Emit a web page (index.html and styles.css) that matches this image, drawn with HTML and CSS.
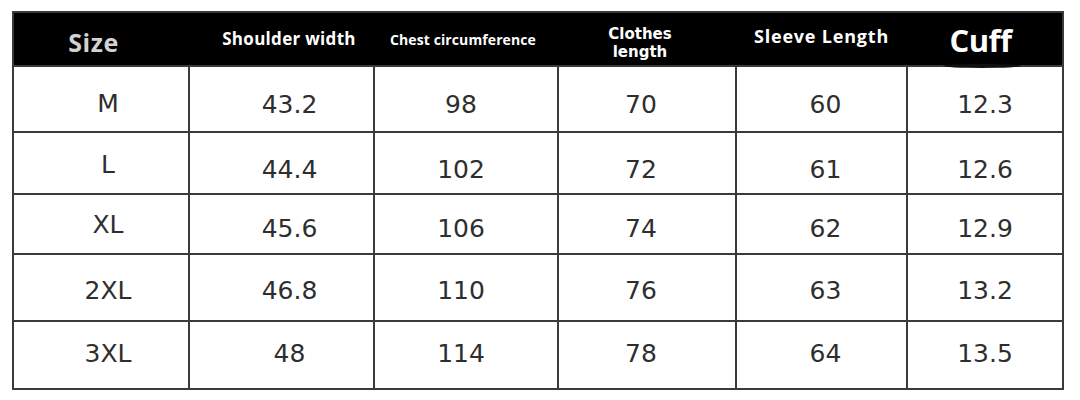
FILE: index.html
```html
<!DOCTYPE html>
<html>
<head>
<meta charset="utf-8">
<link rel="stylesheet" href="styles.css">
</head>
<body>
<table class="size-table">
  <colgroup>
    <col class="w1"><col class="w2"><col class="w3"><col class="w4"><col class="w5"><col class="w6">
  </colgroup>
  <thead>
    <tr>
      <th class="h-size">Size</th>
      <th class="h-shoulder">Shoulder width</th>
      <th class="h-chest">Chest circumference</th>
      <th class="h-clothes"><span class="line">Clothes</span><span class="line">length</span></th>
      <th class="h-sleeve">Sleeve Length</th>
      <th class="h-cuff">Cuff</th>
    </tr>
  </thead>
  <tbody>
    <tr class="r1"><td class="c1">M</td><td class="c2">43.2</td><td class="c3">98</td><td class="c4">70</td><td class="c5">60</td><td class="c6">12.3</td></tr>
    <tr class="r2"><td class="c1">L</td><td class="c2">44.4</td><td class="c3">102</td><td class="c4">72</td><td class="c5">61</td><td class="c6">12.6</td></tr>
    <tr class="r3"><td class="c1">XL</td><td class="c2">45.6</td><td class="c3">106</td><td class="c4">74</td><td class="c5">62</td><td class="c6">12.9</td></tr>
    <tr class="r4"><td class="c1">2XL</td><td class="c2">46.8</td><td class="c3">110</td><td class="c4">76</td><td class="c5">63</td><td class="c6">13.2</td></tr>
    <tr class="r5"><td class="c1">3XL</td><td class="c2">48</td><td class="c3">114</td><td class="c4">78</td><td class="c5">64</td><td class="c6">13.5</td></tr>
  </tbody>
</table>
</body>
</html>
```
FILE: styles.css
```css
html, body {
  margin: 0;
  padding: 0;
  background: #ffffff;
}
body {
  padding: 11px 0 0 12px;
}
.size-table {
  border-collapse: collapse;
  table-layout: fixed;
  width: 1050px;
  border: 2px solid #3a3a3a;
}
.w1 { width: 176px; }
.w2 { width: 185px; }
.w3 { width: 184px; }
.w4 { width: 178px; }
.w5 { width: 171px; }
.w6 { width: 156px; }

thead tr {
  height: 54px;
  background: #000000;
}
th {
  padding: 0;
  color: #ffffff;
  font-family: "Open Sans", "DejaVu Sans", sans-serif;
  font-weight: 700;
  text-align: center;
  vertical-align: middle;
  border: none;
}
.h-size {
  font-size: 25px;
  letter-spacing: 0.5px;
  color: #d2d2d2;
  padding: 6px 16px 0 0;
}
.h-shoulder {
  font-size: 17px;
  letter-spacing: 0.3px;
  padding: 0 0 2px 15px;
}
.h-chest {
  font-size: 14px;
  letter-spacing: 0.1px;
  padding: 0 6px 0 0;
}
.h-clothes {
  font-family: "DejaVu Sans", sans-serif;
  font-size: 15px;
  line-height: 18px;
  padding: 8px 14px 0 0;
}
.line {
  display: block;
}
.h-sleeve {
  font-size: 18px;
  letter-spacing: 0.8px;
  padding: 0 0 6px 0;
}
.h-cuff {
  position: relative;
  font-size: 31px;
  letter-spacing: -0.5px;
  padding: 2px 8px 0 0;
}
.h-cuff::after {
  content: "";
  position: absolute;
  left: 36px;
  width: 78px;
  bottom: -3px;
  height: 4px;
  border-radius: 50%;
  background: #111111;
  filter: blur(0.7px);
}

td {
  padding: 0;
  border: 2px solid #3a3a3a;
  font-family: "DejaVu Sans", "Verdana", sans-serif;
  font-size: 25px;
  color: #2e2e2e;
  text-align: center;
  vertical-align: middle;
}
.r1 { height: 66px; }
.r2 { height: 62px; }
.r3 { height: 60px; }
.r4 { height: 67px; }
.r5 { height: 68px; }

.c2, .c3, .c4, .c5, .c6 { padding-top: 5px; }
.r1 .c2, .r1 .c3, .r1 .c4, .r1 .c5, .r1 .c6 { padding-top: 10px; }
.r2 .c2, .r2 .c3, .r2 .c4, .r2 .c5, .r2 .c6 { padding-top: 12px; }
.r3 .c2, .r3 .c3, .r3 .c4, .r3 .c5, .r3 .c6 { padding-top: 9px; }
.r4 .c2, .r4 .c3, .r4 .c4, .r4 .c5, .r4 .c6 { padding-top: 5px; }
.r5 .c2, .r5 .c3, .r5 .c4, .r5 .c5, .r5 .c6 { padding-top: 0; padding-bottom: 3px; }

.c1 { padding-left: 14px; }
.r1 .c1 { padding-top: 8px; }
.r2 .c1 { padding-top: 3px; }
.r3 .c1 { padding-top: 1px; }
.r4 .c1 { padding-top: 5px; }
.r5 .c1 { padding-bottom: 3px; }

.c2 { padding-left: 16px; }
.c3 { padding-right: 10px; }
.c4 { padding-right: 12px; }
.c5 { padding-left: 8px; }
```
